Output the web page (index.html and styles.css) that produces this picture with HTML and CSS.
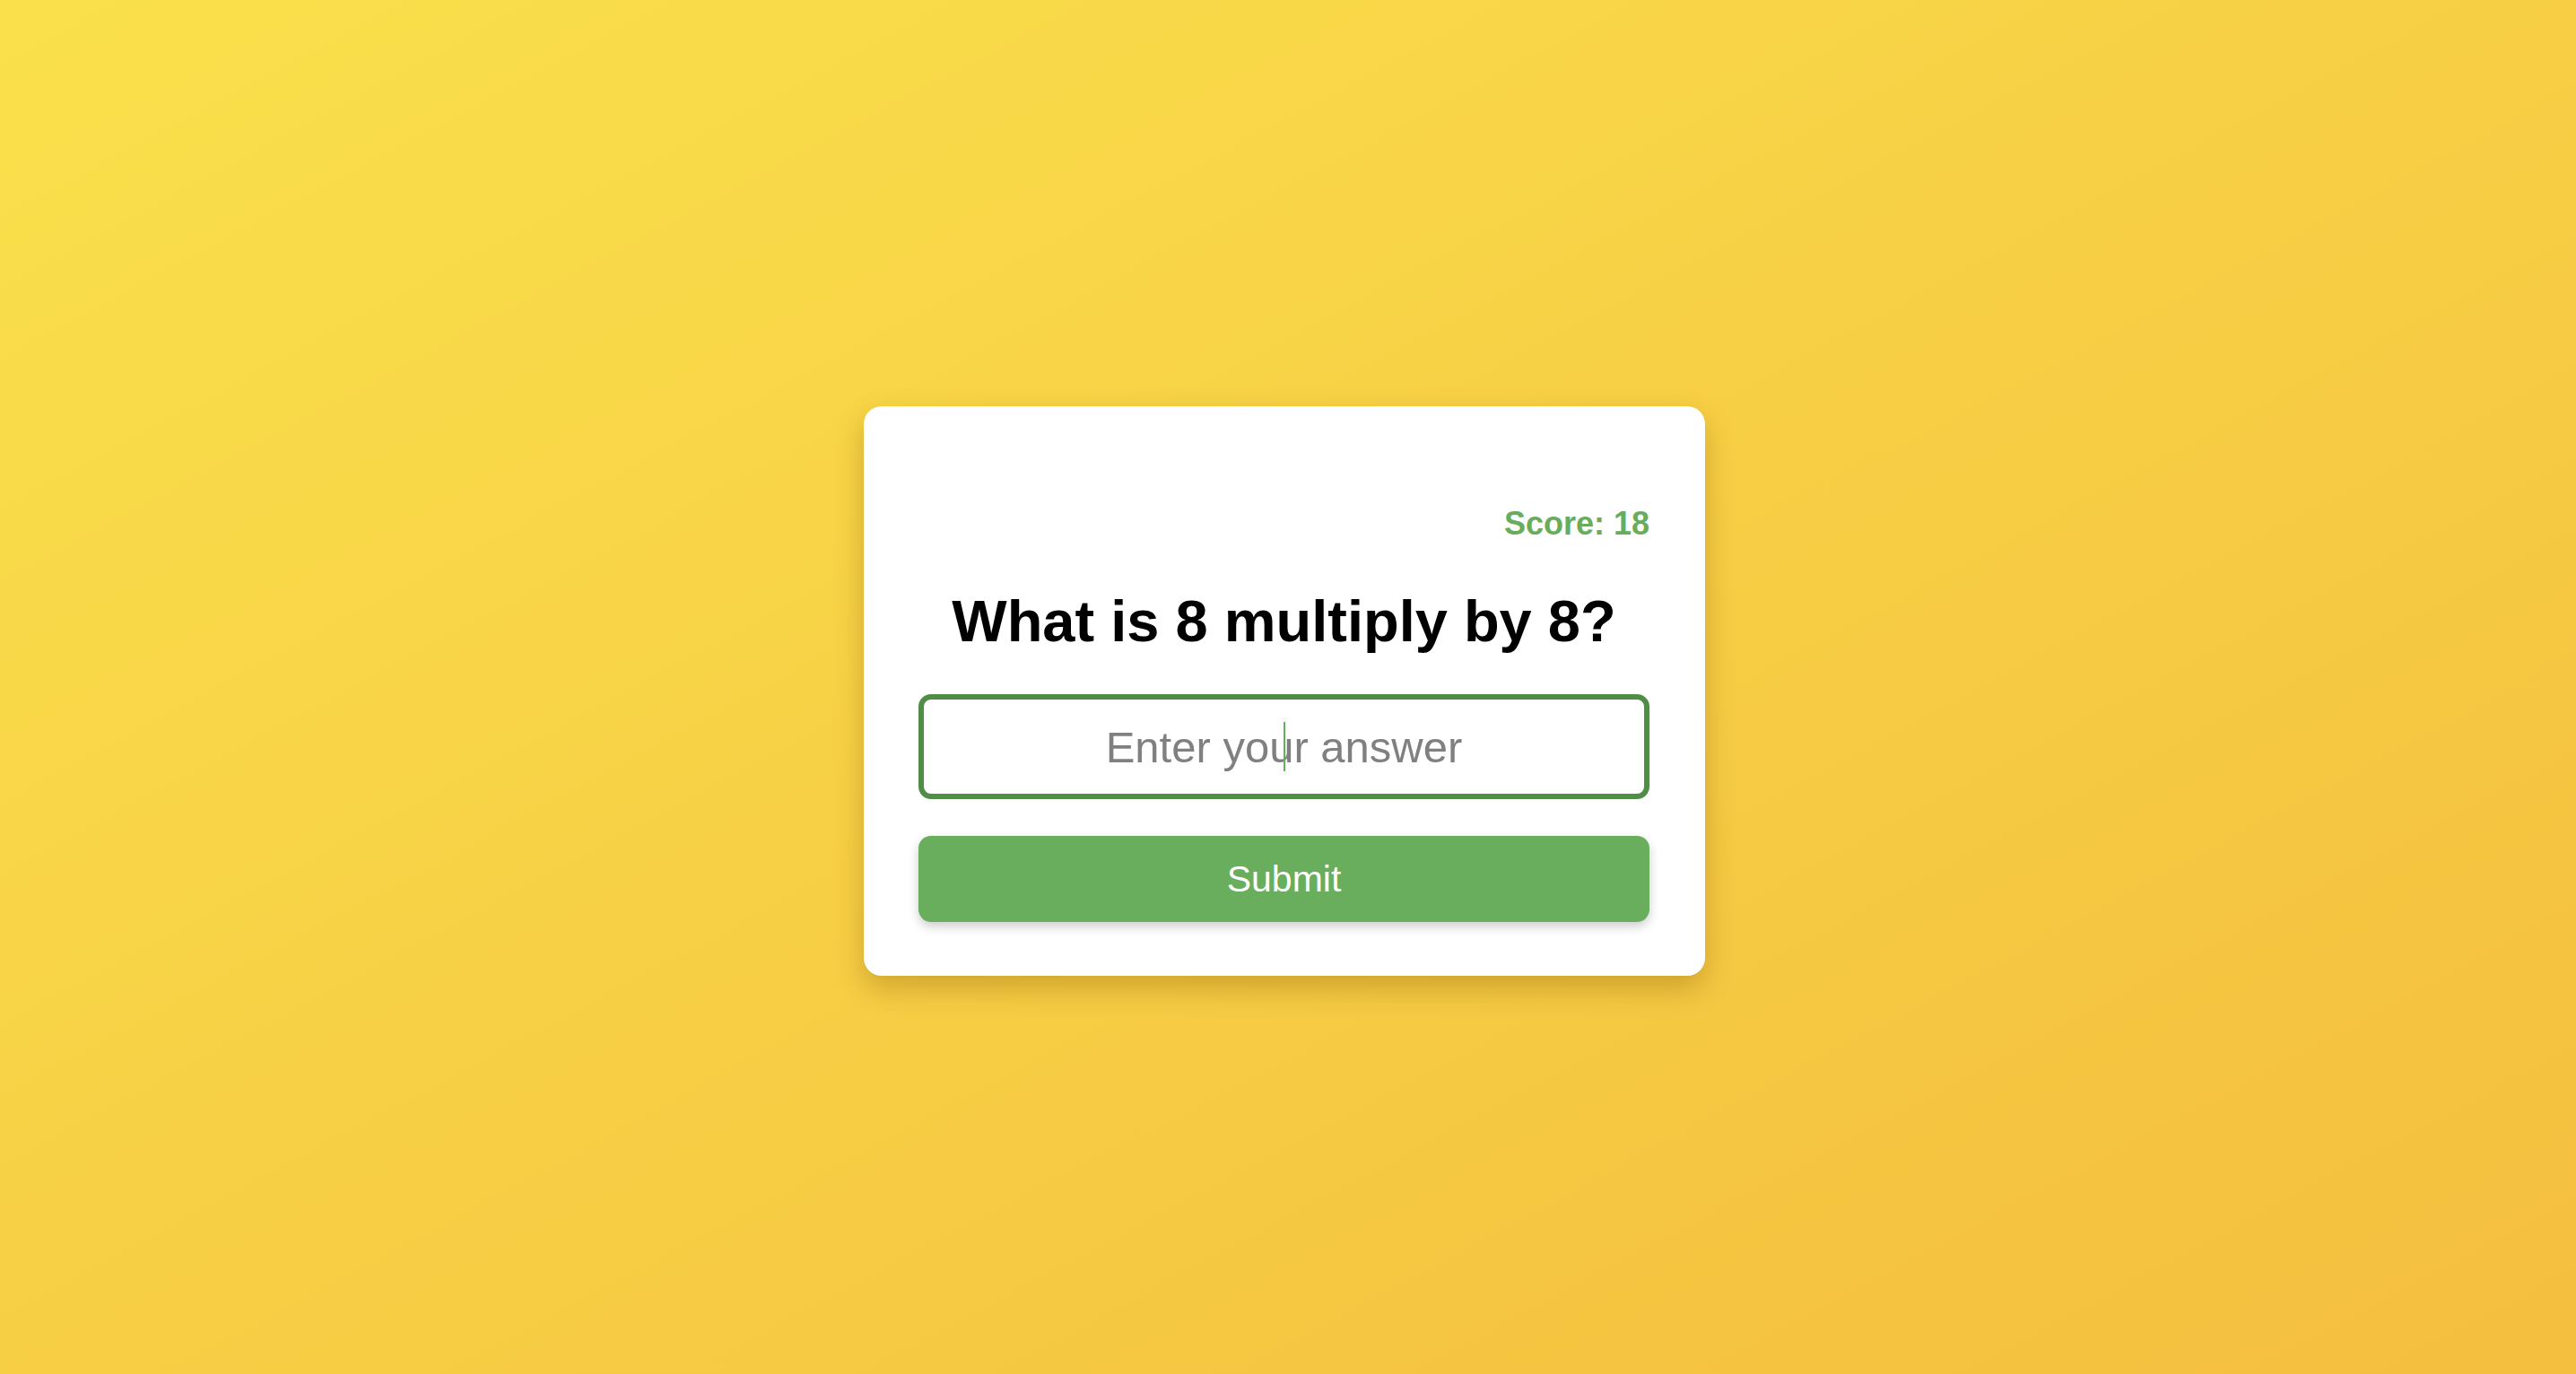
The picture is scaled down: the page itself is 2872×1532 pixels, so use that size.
FILE: index.html
```html
<!DOCTYPE html>
<html lang="en">
<head>
<meta charset="utf-8">
<title>Quiz</title>
<link rel="stylesheet" href="styles.css">
</head>
<body>
<main class="stage">
  <section class="card">
    <div class="score">Score: 18</div>
    <h1 class="question">What is 8 multiply by 8?</h1>
    <div class="field">
      <input class="answer" type="text" placeholder="Enter your answer" autofocus>
      <span class="caret"></span>
    </div>
    <button class="submit" type="button">Submit</button>
  </section>
</main>
</body>
</html>
```

FILE: styles.css
```css
html, body {
  margin: 0;
  padding: 0;
  height: 100%;
}
body {
  background: linear-gradient(to bottom right, #fae04b, #f4be3e);
  font-family: "Liberation Sans", Arial, Helvetica, sans-serif;
}
.stage {
  min-height: 100vh;
  box-sizing: border-box;
  display: flex;
  align-items: center;
  justify-content: center;
  padding: 9px 8px 0 0;
}
.card {
  width: 938px;
  box-sizing: border-box;
  background: #ffffff;
  border-radius: 20px;
  padding: 60px 62px 60px 61px;
  box-shadow: 0 14px 32px rgba(120, 80, 0, 0.32);
  display: flex;
  flex-direction: column;
}
.score {
  margin-top: 50px;
  text-align: right;
  font-size: 36px;
  font-weight: bold;
  color: #67ad5b;
}
.question {
  margin: 50px 0 44px;
  text-align: center;
  font-size: 65px;
  font-weight: bold;
  color: #000000;
}
.field {
  position: relative;
  display: flex;
  flex-direction: column;
}
.answer {
  height: 117px;
  box-sizing: border-box;
  border: 6px solid #508d47;
  border-radius: 14px;
  outline: none;
  text-align: center;
  font-family: "Liberation Sans", Arial, Helvetica, sans-serif;
  font-size: 49px;
  color: #333333;
  caret-color: transparent;
  padding: 0 20px;
}
.answer::placeholder {
  color: #808080;
}
.caret {
  position: absolute;
  left: 50%;
  top: 31px;
  width: 2px;
  height: 55px;
  margin-left: -1px;
  background: #5fb35a;
}
.submit {
  margin-top: 41px;
  height: 96px;
  border: none;
  border-radius: 14px;
  background: #69ae5d;
  color: #ffffff;
  font-family: "Liberation Sans", Arial, Helvetica, sans-serif;
  font-size: 41px;
  box-shadow: 0 5px 12px rgba(0, 0, 0, 0.2);
  cursor: pointer;
}
```
